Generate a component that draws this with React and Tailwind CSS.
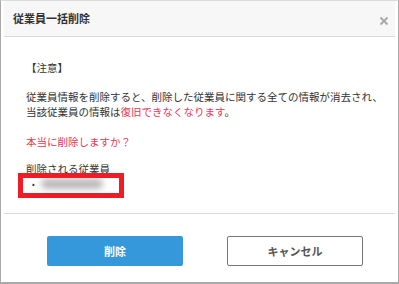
export default function App() {
  const font = { fontFamily: '"Noto Sans CJK JP", "Noto Sans", sans-serif' };
  return (
    <div
      className="w-[399px] h-[284px] bg-white border-x border-b-2 border-t border-x-[#a9a9a9] border-b-[#a9a9a9] border-t-[#dcdcdc] px-[3px] flex flex-col text-[#333]"
      style={font}
    >
      <div className="h-[36px] shrink-0 bg-[#f7f7f7] border-b border-[#dadada] flex items-center justify-between pl-[9px] pr-[6px]">
        <span className="text-[11px] font-bold leading-none text-[#333]">従業員一括削除</span>
        <svg width="10" height="10" viewBox="0 0 10 10" className="mt-[5px]">
          <path d="M1.5 1.5 L8.5 8.5 M8.5 1.5 L1.5 8.5" stroke="#a8a8a8" strokeWidth="1.8" />
        </svg>
      </div>

      <div className="relative pl-[22px] pt-[23px] pb-[22px] text-[10.5px] leading-[15px] border-b border-[#dadada]">
        <p>【注意】</p>
        <p className="mt-[14px] whitespace-nowrap">
          従業員情報を削除すると、削除した従業員に関する全ての情報が消去され、
          <br />
          当該従業員の情報は<span className="text-[#e8375a]">復旧できなくなります</span>。
        </p>
        <p className="mt-[15px] text-[#e8375a]">本当に削除しますか？</p>
        <p className="mt-[12px]">削除される従業員</p>
        <ul className="flex items-center h-[15px]">
          <li className="flex items-center pl-[6px] gap-[6px]">
            <span className="text-[8px]">•</span>
            <span className="w-[62px] h-[10px] bg-[#b8b8b8] rounded-full blur-[3px]"></span>
          </li>
        </ul>
        <div className="absolute left-[14px] top-[136px] w-[106px] h-[25px] border-[5px] border-[#ee1c25]"></div>
      </div>

      <div className="flex pl-[43px] pt-[22px] gap-[44px]">
        <button className="w-[136px] h-[30px] rounded-[2px] bg-[#3498db] text-white text-[11px] font-bold">
          削除
        </button>
        <button className="w-[136px] h-[30px] rounded-[2px] border border-[#777] bg-white text-[#555] text-[11px] font-bold">
          キャンセル
        </button>
      </div>
    </div>
  );
}
